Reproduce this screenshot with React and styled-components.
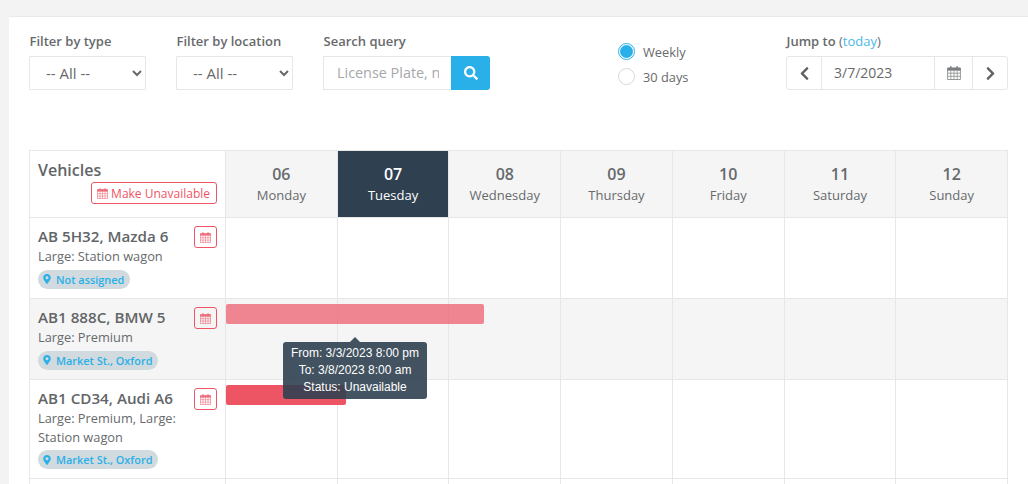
import React from 'react';
import styled, { createGlobalStyle } from 'styled-components';
import { FaChevronLeft, FaChevronRight, FaSearch, FaMapMarkerAlt } from 'react-icons/fa';

const Global = createGlobalStyle`
  html, body { margin: 0; padding: 0; background: #f3f3f3; overflow: hidden; height: 484px; }
  body { font-family: "Open Sans", sans-serif; color: #676a6c; }
  * { box-sizing: border-box; }
`;
const Page = styled.div`
  margin: 16px 0 0 9px;
  height: 468px;
  background: #fff;
  border-top: 1px solid #e7eaec;
  padding: 16px 20px 0 20px;
  overflow: hidden;
`;
const Filters = styled.div`
  display: flex;
  align-items: flex-start;
  height: 117px;
`;
const Field = styled.div`
  width: ${p => p.$w}px;
  flex: none;
`;
const Label = styled.div`
  font-size: 13px;
  font-weight: 600;
  line-height: 17px;
  height: 23px;
  padding-left: 0.5px;
  color: #676a6c;
`;
const Select = styled.select`
  display: block;
  width: 117px;
  height: 34px;
  border: 1px solid #e5e6e7;
  background: #fff;
  color: #676a6c;
  font: 400 15px "Open Sans", sans-serif;
  padding: 0 12px;
  border-radius: 1px;
  outline: none;
`;
const SearchRow = styled.div`
  display: flex;
  width: 167px;
  height: 34px;
`;
const SearchInput = styled.input`
  width: 128px;
  height: 34px;
  border: 1px solid #e5e6e7;
  border-right: none;
  padding: 0 12px 1px 13px;
  font: 400 14.4px "Open Sans", sans-serif;
  outline: none;
  border-radius: 1px 0 0 1px;
  &::placeholder { color: #a5a8ab; opacity: 1; }
`;
const SearchButton = styled.button`
  width: 39px;
  height: 34px;
  border: none;
  background: #29b0e8;
  color: #fff;
  display: flex;
  align-items: center;
  justify-content: center;
  font-size: 14px;
  padding: 0;
  border-radius: 0 3px 3px 0;
`;
const RadioGroup = styled.div`
  width: 168px;
  flex: none;
  margin-left: 128px;
  padding-top: 10px;
  display: flex;
  flex-direction: column;
  gap: 8px;
`;
const RadioRow = styled.div`
  display: flex;
  align-items: center;
  gap: 8px;
  height: 17px;
  font-size: 12.8px;
  color: #676a6c;
`;
const RadioDot = styled.span`
  width: 17px;
  height: 17px;
  border-radius: 50%;
  flex: none;
  border: 1px solid ${p => (p.$on ? '#29b0e8' : '#d5d7d9')};
  background: #fff;
  display: flex;
  align-items: center;
  justify-content: center;
  &::after {
    content: '';
    display: ${p => (p.$on ? 'block' : 'none')};
    width: 13px;
    height: 13px;
    border-radius: 50%;
    background: #29b0e8;
  }
`;
const TodayLink = styled.span`
  color: #4ab9e8;
  font-weight: 400;
`;
const Paren = styled.span`
  font-weight: 400;
`;
const DateGroup = styled.div`
  display: flex;
  width: 222px;
  height: 34px;
  border: 1px solid #e5e6e7;
  border-radius: 3px;
`;
const DateButton = styled.div`
  width: ${p => p.$w}px;
  flex: none;
  display: flex;
  align-items: center;
  justify-content: center;
  font-size: 15px;
  color: #5f6265;
`;
const DateValue = styled.div`
  width: 114px;
  flex: none;
  border-left: 1px solid #e5e6e7;
  border-right: 1px solid #e5e6e7;
  padding-left: 12px;
  font-size: 14px;
  line-height: 32px;
  color: #676a6c;
`;
const DateCalendar = styled(DateButton)`
  border-right: 1px solid #e5e6e7;
`;
const Table = styled.div`
  position: relative;
  width: 979px;
  border-top: 1px solid #e7e7e7;
  border-left: 1px solid #e7e7e7;
`;
const Row = styled.div`
  display: grid;
  grid-template-columns: 196px repeat(7, 1fr);
  height: ${p => p.$h}px;
  border-bottom: 1px solid #e7e7e7;
  background: ${p => (p.$shade ? '#f5f5f5' : '#fff')};
  position: relative;
`;
const Cell = styled.div`
  border-right: 1px solid #e7e7e7;
`;
const VehiclesHead = styled(Cell)`
  padding: 9px 8px 0 8px;
  display: flex;
  flex-direction: column;
  align-items: flex-start;
`;
const HeadTitle = styled.div`
  font-size: 16px;
  font-weight: 600;
  line-height: 20px;
  color: #626568;
`;
const MakeButton = styled.div`
  align-self: flex-end;
  margin-top: 2px;
  height: 22px;
  border: 1px solid #ed5565;
  border-radius: 3px;
  color: #ed5565;
  font-size: 12px;
  display: flex;
  align-items: center;
  gap: 3px;
  padding: 0 6px 0 5px;
  white-space: nowrap;
`;
const Day = styled(Cell)`
  background: ${p => (p.$active ? '#2f4050' : '#f5f5f5')};
  color: ${p => (p.$active ? '#fff' : '#676a6c')};
  text-align: center;
  padding-top: 12px;
`;
const DayNum = styled.div`
  font-size: 16px;
  font-weight: 600;
  line-height: 22px;
`;
const DayName = styled.div`
  font-size: 13px;
  line-height: 21px;
`;
const VehicleCell = styled(Cell)`
  position: relative;
  padding: 8px 8px 0 8px;
`;
const VehicleName = styled.div`
  font-size: 15.2px;
  font-weight: 600;
  line-height: 20px;
  color: #626568;
  white-space: nowrap;
`;
const VehicleType = styled.div`
  font-size: 12.8px;
  line-height: 18.7px;
  width: 150px;
  margin-top: 1px;
`;
const Badge = styled.span`
  display: inline-flex;
  align-items: center;
  gap: 4px;
  margin-top: 4px;
  height: 19px;
  padding: 0 6px 0 4px;
  border-radius: 10px;
  background: #d1dade;
  color: #29b0e8;
  font-size: 10.9px;
  font-weight: 600;
  svg { font-size: 10px; }
`;
const IconButton = styled.div`
  position: absolute;
  top: 8px;
  right: 8px;
  width: 23px;
  height: 22px;
  border: 1px solid #ed5565;
  border-radius: 3px;
  display: flex;
  align-items: center;
  justify-content: center;
`;
const Bar = styled.div`
  position: absolute;
  z-index: 2;
  top: ${p => p.$top}px;
  left: 196px;
  width: ${p => p.$w}px;
  height: 20px;
  border-radius: 2px;
  background: #ed5565;
  opacity: ${p => p.$o};
`;
const Tooltip = styled.div`
  position: absolute;
  z-index: 3;
  left: 253px;
  top: 191px;
  width: 144px;
  height: 57px;
  background: rgba(47, 64, 80, 0.9);
  border-radius: 3px;
  color: #fff;
  font: 400 12px/17px "Liberation Sans", Arial, sans-serif;
  text-align: center;
  padding-top: 3px;
  white-space: nowrap;
  &::before {
    content: '';
    position: absolute;
    top: -5px;
    left: 67px;
    border-left: 5px solid transparent;
    border-right: 5px solid transparent;
    border-bottom: 5px solid rgba(47, 64, 80, 0.9);
  }
`;

const Cal = ({ size = 12, color = '#ed5565' }) => (
  <svg width={size} height={size} viewBox="0 0 14 14" fill="none" stroke={color} strokeWidth="0.8" opacity="0.85">
    <path d="M.6 2h12.8v11.5H.6z" />
    <path d="M.6 2h12.8v2.4H.6z" fill={color} strokeWidth="0.5" />
    <path d="M3.8 .2v2.8M10.2 .2v2.8" strokeWidth="1.6" />
    <path d="M.6 7.2h12.8M.6 10.3h12.8M3.8 4.5v9M7 4.5v9M10.2 4.5v9" strokeWidth="0.7" />
  </svg>
);

const days = [
  ['06', 'Monday'], ['07', 'Tuesday'], ['08', 'Wednesday'], ['09', 'Thursday'],
  ['10', 'Friday'], ['11', 'Saturday'], ['12', 'Sunday'],
];
const vehicles = [
  { name: 'AB 5H32, Mazda 6', type: 'Large: Station wagon', loc: 'Not assigned', h: 81 },
  { name: 'AB1 888C, BMW 5', type: 'Large: Premium', loc: 'Market St., Oxford', h: 81, shade: true },
  { name: 'AB1 CD34, Audi A6', type: 'Large: Premium, Large: Station wagon', loc: 'Market St., Oxford', h: 99 },
  { name: '', type: '', loc: '', h: 60, empty: true },
];

export default function App() {
  return (
    <Page>
      <Global />
      <Filters>
        <Field $w={147}>
          <Label>Filter by type</Label>
          <Select defaultValue="all"><option value="all">-- All --</option></Select>
        </Field>
        <Field $w={147}>
          <Label>Filter by location</Label>
          <Select defaultValue="all"><option value="all">-- All --</option></Select>
        </Field>
        <Field $w={167}>
          <Label>Search query</Label>
          <SearchRow>
            <SearchInput placeholder="License Plate, name, etc." />
            <SearchButton><FaSearch /></SearchButton>
          </SearchRow>
        </Field>
        <RadioGroup>
          <RadioRow><RadioDot $on />Weekly</RadioRow>
          <RadioRow><RadioDot />30 days</RadioRow>
        </RadioGroup>
        <Field $w={222}>
          <Label>Jump to <Paren>(<TodayLink>today</TodayLink>)</Paren></Label>
          <DateGroup>
            <DateButton $w={34}><FaChevronLeft /></DateButton>
            <DateValue>3/7/2023</DateValue>
            <DateCalendar $w={38}><Cal size={14} color="#676a6c" /></DateCalendar>
            <DateButton $w={34}><FaChevronRight /></DateButton>
          </DateGroup>
        </Field>
      </Filters>
      <Table>
        <Row $h={67}>
          <VehiclesHead>
            <HeadTitle>Vehicles</HeadTitle>
            <MakeButton><Cal size={11} />Make Unavailable</MakeButton>
          </VehiclesHead>
          {days.map(([n, d], i) => (
            <Day key={n} $active={i === 1}>
              <DayNum>{n}</DayNum>
              <DayName>{d}</DayName>
            </Day>
          ))}
        </Row>
        {vehicles.map((v, i) => (
          <Row key={i} $h={v.h} $shade={v.shade}>
            <VehicleCell>
              {!v.empty && (
                <>
                  <VehicleName>{v.name}</VehicleName>
                  <VehicleType>{v.type}</VehicleType>
                  <Badge><FaMapMarkerAlt />{v.loc}</Badge>
                  <IconButton><Cal size={11} /></IconButton>
                </>
              )}
            </VehicleCell>
            {days.map(([n]) => <Cell key={n} />)}
          </Row>
        ))}
        <Bar $top={153} $w={258} $o={0.7} />
        <Bar $top={234} $w={120} $o={1} />
        <Tooltip>
          <div>From: 3/3/2023 8:00 pm</div>
          <div>To: 3/8/2023 8:00 am</div>
          <div>Status: Unavailable</div>
        </Tooltip>
      </Table>
    </Page>
  );
}
